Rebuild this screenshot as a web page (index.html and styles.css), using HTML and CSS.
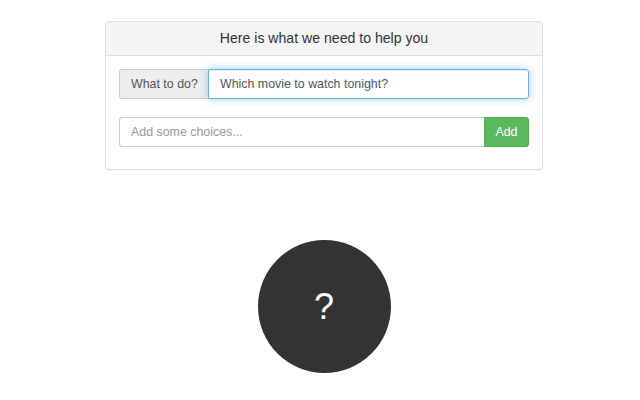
FILE: index.html
```html
<!DOCTYPE html>
<html>
<head>
<meta charset="utf-8">
<link rel="stylesheet" href="styles.css">
</head>
<body>
<div class="page">
  <div class="panel">
    <div class="panel-heading">Here is what we need to help you</div>
    <div class="panel-body">
      <div class="input-group">
        <span class="addon">What to do?</span>
        <div class="field focused">Which movie to watch tonight?</div>
      </div>
      <div class="input-group second">
        <div class="field placeholder">Add some choices...</div>
        <span class="btn-add">Add</span>
      </div>
    </div>
  </div>
  <div class="circle">?</div>
</div>
</body>
</html>
```
FILE: styles.css
```css
html, body {
  margin: 0;
  padding: 0;
  background: #fff;
}
body {
  font-family: "Liberation Sans", Arial, sans-serif;
  color: #333;
}
.page {
  padding-left: 8px;
  padding-top: 21px;
  display: flex;
  flex-direction: column;
  align-items: center;
}
.panel {
  width: 438px;
  box-sizing: border-box;
  border: 1px solid #ddd;
  border-radius: 4px;
  box-shadow: 0 1px 1px rgba(0,0,0,.05);
  background: #fff;
}
.panel-heading {
  height: 33px;
  line-height: 33px;
  background: #f5f5f5;
  border-bottom: 1px solid #ddd;
  border-radius: 3px 3px 0 0;
  text-align: center;
  font-size: 14.1px;
  color: #333;
}
.panel-body {
  padding: 13px 13px 22px 13px;
}
.input-group {
  display: flex;
  height: 30px;
  font-size: 12.4px;
}
.input-group.second {
  margin-top: 18px;
}
.addon {
  box-sizing: border-box;
  height: 30px;
  line-height: 28px;
  padding: 0 10px 0 11px;
  background: #eee;
  border: 1px solid #ccc;
  border-right: 0;
  border-radius: 3px 0 0 3px;
  color: #555;
  width: 89px;
  white-space: nowrap;
}
.field {
  flex: 1;
  box-sizing: border-box;
  height: 30px;
  line-height: 28px;
  padding: 0 11px;
  border: 1px solid #ccc;
  color: #555;
}
.field.focused {
  border-color: #66afe9;
  border-radius: 0 3px 3px 0;
  box-shadow: inset 0 1px 1px rgba(0,0,0,.075), 0 0 8px rgba(102,175,233,.6);
}
.field.placeholder {
  color: #999;
  border-radius: 3px 0 0 3px;
  border-right: 0;
}
.btn-add {
  box-sizing: border-box;
  width: 45px;
  height: 30px;
  line-height: 28px;
  text-align: center;
  background: #5cb85c;
  border: 1px solid #4cae4c;
  border-radius: 0 3px 3px 0;
  color: #fff;
}
.circle {
  margin-top: 70px;
  width: 133px;
  height: 133px;
  border-radius: 50%;
  background: #333;
  color: #fff;
  font-size: 36px;
  display: flex;
  align-items: center;
  justify-content: center;
}
```
